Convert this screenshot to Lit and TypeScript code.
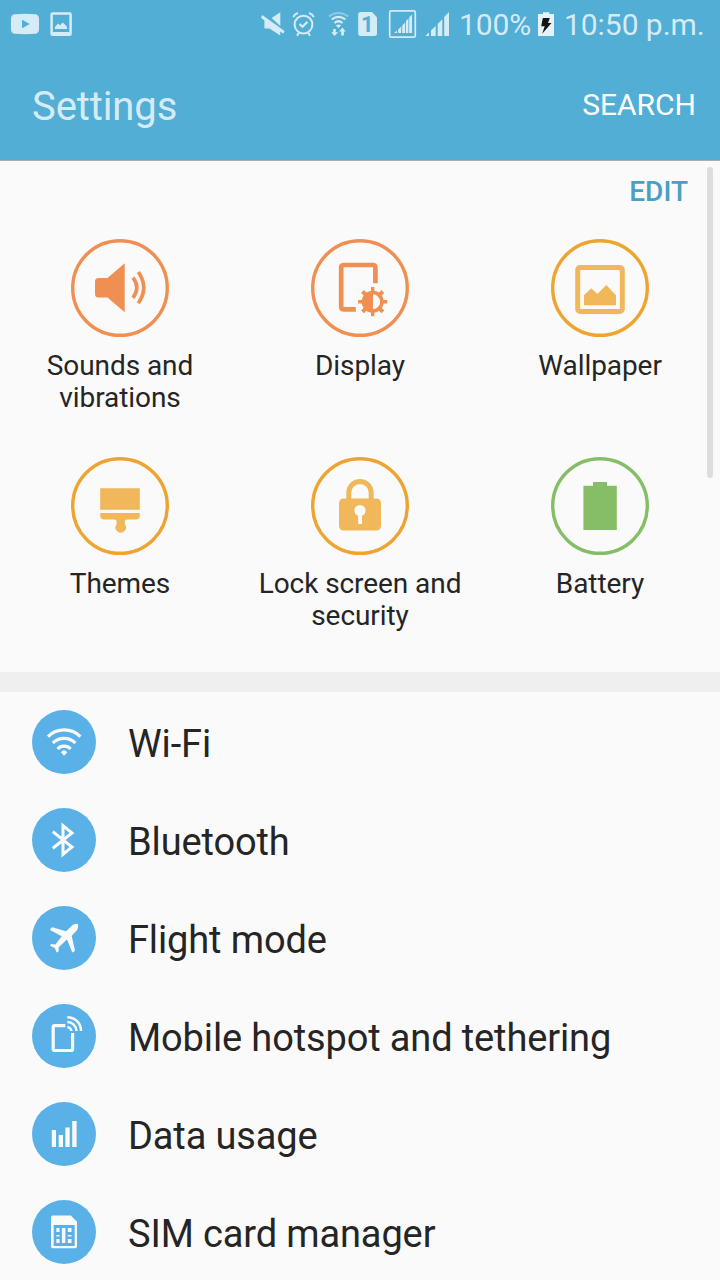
import { LitElement, html, svg, css } from "lit";
import { customElement, property } from "lit/decorators.js";

const ORANGE = "#ef9052";
const AMBER = "#eda431";
const GREEN = "#86be68";

const tiles = [
  {
    label: "Sounds and vibrations",
    ring: ORANGE,
    art: svg`<path fill="#ef9052" d="M27.5 39H36.5L53.7 24.3V73.3L36.5 58.6H27.5Q24 58.6 24 55V42.5Q24 39 27.5 39Z"/>
      <g fill="none" stroke="#ef9052" stroke-width="3.7"><path d="M62 38.6Q69.6 48.6 62 58.8"/><path d="M67.3 33Q78.2 48.6 67.3 64.2"/></g>`,
  },
  {
    label: "Display",
    ring: ORANGE,
    art: svg`<path fill="none" stroke="#ef9052" stroke-width="4.7" d="M64.4 44.3V28.6Q64.4 26 61.8 26H33Q30.2 26 30.2 28.6V67.8Q30.2 70.4 33 70.4H44.8"/>
      <circle cx="61.7" cy="62.7" r="9.2" fill="none" stroke="#ef9052" stroke-width="3.6"/>
      <path fill="#ef9052" d="M62 53.5A9.2 9.2 0 0 0 62 71.9Z"/>
      <g stroke="#ef9052" stroke-width="3.4"><path d="M61.7 48.1V53.6M61.7 71.8V77.3M47.1 62.7H52.6M70.8 62.7H76.3"/><path stroke-width="4" d="M51.5 52.5L55.2 56.2M68.2 69.2L71.9 72.9M71.9 52.5L68.2 56.2M55.2 69.2L51.5 72.9"/></g>`,
  },
  {
    label: "Wallpaper",
    ring: AMBER,
    art: svg`<rect x="26.7" y="28.5" width="44.6" height="44" rx="2.5" fill="none" stroke="#f0b75b" stroke-width="5"/>
      <path fill="#f0b75b" d="M33 66.3V56.3L40.3 49.3L46.3 55L55.3 46L65 56.3V66.3Z"/>`,
  },
  {
    label: "Themes",
    ring: AMBER,
    art: svg`<path fill="#f0b75b" d="M29.2 31.2H68.8V52.8H29.2ZM29.2 56H68.8V58.5Q68.8 62.4 65 62.4H56Q53.8 62.4 53.8 64.5V67.2A5.2 5.2 0 1 1 45.6 67.2V64.5Q45.6 62.4 43.4 62.4H33Q29.2 62.4 29.2 58.5Z"/>`,
  },
  {
    label: "Lock screen and security",
    ring: AMBER,
    art: svg`<path fill="none" stroke="#f0b75b" stroke-width="5" d="M37.8 43V35.7A11.2 11.2 0 0 1 60.2 35.7V43"/>
      <rect x="28" y="41.4" width="42" height="32.2" rx="4.5" fill="#f0b75b"/>
      <circle cx="49" cy="53.5" r="5.6" fill="#fafafa"/><path fill="#fafafa" d="M47.2 57H51V67H47.2Z"/>`,
  },
  {
    label: "Battery",
    ring: GREEN,
    art: svg`<path fill="#86be68" d="M42 25H56V28.8H65.8V73H32.4V28.8H42Z"/>`,
  },
];

const rows = [
  {
    label: "Wi-Fi",
    art: svg`<g fill="none" stroke="#fafafa" stroke-width="3.2"><path d="M16 26.6A23 23 0 0 1 48.4 26.6"/><path d="M20.8 33A16 16 0 0 1 43.4 33"/><path d="M25.6 39A9 9 0 0 1 38.6 39"/></g>
      <path fill="#fafafa" d="M28.9 42.2Q32.1 38.4 35.3 42.2L32.1 45.8Z"/>`,
  },
  {
    label: "Bluetooth",
    art: svg`<path fill="none" stroke="#fafafa" stroke-width="3" d="M20.8 23.6L40 39L31 46.4V17.6L40 25L20.8 40.2"/>`,
  },
  {
    label: "Flight mode",
    art: svg`<path fill="#fafafa" d="M46 18Q43.5 17.3 40.7 18.9L34 25.3L20.3 21.2Q18.8 22 18 24L29.7 30.3L23.4 38.4L19.3 38Q18.3 38.7 18 39.7L22.7 42L24.7 46.4Q26 46.3 26.7 45.3L26.7 41.3L35 33.4L40.3 46.4Q42.2 46.2 43 44.6L39.7 30L45.3 23.7Q46.6 21 46 18Z"/>`,
  },
  {
    label: "Mobile hotspot and tethering",
    art: svg`<g fill="none" stroke="#fafafa"><path stroke-width="3.2" d="M33.4 21.6H22.6Q21.2 21.6 21.2 23V45Q21.2 46.5 22.6 46.5H39.2Q40.6 46.5 40.6 45V29"/>
      <path stroke-width="2.4" d="M35.3 23.2A4 4 0 0 1 39.3 27M35.3 18A9.2 9.2 0 0 1 44.5 27M35.3 13.2A13.6 13.6 0 0 1 49 27"/></g>`,
  },
  {
    label: "Data usage",
    art: svg`<path fill="#fafafa" d="M19.8 28H24V45H19.8ZM26.7 33H31V45H26.7ZM33.4 25.4H37.7V45H33.4ZM40.2 19H44.6V45H40.2Z"/>`,
  },
  {
    label: "SIM card manager",
    art: svg`<path fill="#fafafa" fill-rule="evenodd" d="M20.8 15.5H38.8L45 21.8V46.6Q45 48.3 43.2 48.3H20.8Q19 48.3 19 46.6V17.2Q19 15.5 20.8 15.5ZM21.7 25V46H42.7V25Z"/>
      <path fill="#fafafa" d="M24.3 28H27.5V32H24.3ZM24.3 34.9H27.5V36.5H24.3ZM24.3 39H27.5V43H24.3ZM29.9 28H33.4V43H29.9ZM35.8 28H39.5V32H35.8ZM35.8 34.9H39.5V36.5H35.8ZM35.8 39H39.5V43H35.8Z"/>`,
  },
];

@customElement("status-bar")
class StatusBar extends LitElement {
  static styles = css`
    :host {
      display: flex;
      align-items: flex-start;
      height: 48px;
      padding-left: 8px;
      box-sizing: border-box;
      color: #d5ebf5;
      font-size: 30px;
      line-height: 50px;
      white-space: nowrap;
    }
    svg { display: block; flex: none; }
    .gap { flex: none; width: 180px; }
    .percent { width: 77px; padding-left: 1px; letter-spacing: -0.1px; }
    .clock { padding-left: 8px; letter-spacing: -0.05px; }
    .one { font: 700 22px Roboto, sans-serif; fill: #52aed5; }
  `;
  render() {
    return html`
      <svg width="72" height="48" viewBox="8 0 72 48">
        <path fill="#d5ebf5" fill-rule="evenodd" d="M15 14.3Q25 13.4 35 14.3Q38.8 14.5 39 18.5V29.5Q38.8 33.5 35 33.8Q25 34.6 15 33.8Q11.2 33.5 11 29.5V18.5Q11.2 14.5 15 14.3ZM22 19.8V28.2L29.8 24Z"/>
        <rect x="51.6" y="13.4" width="19" height="21.3" rx="1" fill="none" stroke="#d5ebf5" stroke-width="2.5"/>
        <path fill="#d5ebf5" d="M55 29V27L58 23.6L60 25.2L62.7 22.6L65 24.6L67 27V29Z"/>
        <path fill="#d5ebf5" d="M52.5 32H69.5V34H52.5Z"/>
      </svg>
      <div class="gap"></div>
      <svg width="198" height="48" viewBox="260 0 198 48">
        <g fill="#d5ebf5">
          <path d="M280.3 12.2V26L271.6 18Z"/>
          <path d="M262.2 15L284.6 31L283.2 33.7L280.2 31.6V35.5L269.5 28.6H265.6Q264.4 28.6 264.4 27.4V20.4L261 17.8Z"/>
        </g>
        <g fill="none" stroke="#d5ebf5" stroke-width="2">
          <circle cx="303.5" cy="24.6" r="8.9"/>
          <path stroke-width="2.2" d="M299.5 24L302.5 26.7L307.5 21.8"/>
          <path d="M293.2 17Q294.5 14 298 13M313.8 17Q312.5 14 309 13M299 32.5L297 35.8M308 32.5L310 35.8"/>
        </g>
        <g fill="none" stroke="#d5ebf5" stroke-width="2.2">
          <path opacity=".45" d="M328.8 16.3Q338.5 9.6 348.2 16.3"/>
          <path d="M331.7 19.4Q338.5 14.3 345.3 19.4M334.5 23Q338.5 19.5 342.5 23"/>
        </g>
        <path fill="#d5ebf5" d="M335.8 25.6Q338.5 23.4 341.2 25.6L338.5 28ZM333.2 29H335.8V32.3H338.2L334.5 36L331.2 32.3H333.2ZM341.2 35.5V31.4H339L342.5 27.6L345.8 31.4H343.9V35.5Z"/>
        <path fill="#d5ebf5" d="M361 12H372L377 17.2V33.5Q377 36 374.4 36H361Q358.2 36 358.2 33.5V14.5Q358.2 12 361 12Z"/>
        <text class="one" x="361" y="32">1</text>
        <rect x="389.7" y="10.8" width="25.6" height="26.4" rx="1.5" fill="none" stroke="#d5ebf5" stroke-width="1.7"/>
        <path fill="#d5ebf5" d="M394 33L397 30.6V33ZM398.2 29.4L401.2 26.6V33H398.2ZM402.2 25.4L405.2 22.4V33H402.2ZM406 21L408.4 18.6V33H406ZM409.2 17.4L412 14.5V33H409.2Z"/>
        <path fill="#d5ebf5" d="M425.3 36L429 32.4V36ZM431 30.6L435.7 26V36H431ZM437.7 24L442.3 19.2V36H437.7ZM444.2 17L449 12V36H444.2Z"/>
      </svg>
      <div class="percent">100%</div>
      <svg width="20" height="48" viewBox="536 0 20 48">
        <path fill="#e4f3f9" d="M543 12.2H549.3V14H554V36H538V14H543Z"/>
        <path fill="#151515" d="M542.8 18H549.8L548 23H551.5L542.2 33.8L544.7 26.2H541.2Z"/>
      </svg>
      <div class="clock">10:50 p.m.</div>
    `;
  }
}

@customElement("quick-tile")
class QuickTile extends LitElement {
  static styles = css`
    :host { display: flex; flex-direction: column; align-items: center; height: 218px; }
    svg { display: block; }
    .label {
      width: 216px;
      padding-top: 13px;
      font-size: 28px;
      line-height: 32px;
      letter-spacing: -0.07px;
      text-align: center;
    }
  `;
  @property({ attribute: false }) tile: any;
  render() {
    return html`<svg width="98" height="98" viewBox="0 0 98 98">
        <circle cx="49" cy="49" r="47.3" fill="none" stroke=${this.tile.ring} stroke-width="3.4" />
        ${this.tile.art}
      </svg>
      <div class="label">${this.tile.label}</div>`;
  }
}

@customElement("setting-row")
class SettingRow extends LitElement {
  static styles = css`
    :host { display: flex; align-items: center; gap: 32px; height: 98px; padding-left: 32px; }
    svg { display: block; flex: none; }
    .label { padding-top: 4px; font-size: 38px; line-height: 48px; letter-spacing: -0.13px; white-space: nowrap; }
  `;
  @property({ attribute: false }) row: any;
  render() {
    return html`<svg width="64" height="64" viewBox="0 0 64 64">
        <circle cx="32" cy="32" r="32" fill="#5ab1e8" />
        ${this.row.art}
      </svg>
      <div class="label">${this.row.label}</div>`;
  }
}

@customElement("app-root")
class AppRoot extends LitElement {
  static styles = css`
    :host {
      display: block;
      position: relative;
      width: 720px;
      height: 1280px;
      overflow: hidden;
      background: #fafafa;
      color: #252525;
      font-family: Roboto, sans-serif;
    }
    .header { height: 160px; background: #52aed5; border-bottom: 1px solid #abaeb0; }
    .title-bar {
      display: flex;
      justify-content: space-between;
      align-items: center;
      height: 112px;
      padding: 0 24px 0 32px;
    }
    .title { padding-top: 5px; font-size: 40px; line-height: 48px; letter-spacing: -0.1px; color: #d5ebf5; }
    .search { padding-top: 2px; font-size: 30px; line-height: 40px; color: #fff; }
    .edit {
      height: 78px;
      padding: 15px 32px 0 0;
      box-sizing: border-box;
      font-size: 28px;
      font-weight: 500;
      line-height: 32px;
      text-align: right;
      color: #4a9fc3;
    }
    .grid { display: grid; grid-template-columns: repeat(3, 240px); height: 433px; }
    .divider { height: 20px; margin-bottom: 1px; background: #efefef; }
    .scrollbar {
      position: absolute;
      right: 7px;
      top: 167px;
      width: 6px;
      height: 311px;
      border-radius: 3px;
      background: #dcdedd;
    }
  `;
  render() {
    return html`
      <div class="header">
        <status-bar></status-bar>
        <div class="title-bar">
          <div class="title">Settings</div>
          <div class="search">SEARCH</div>
        </div>
      </div>
      <div class="edit">EDIT</div>
      <div class="grid">${tiles.map((t) => html`<quick-tile .tile=${t}></quick-tile>`)}</div>
      <div class="divider"></div>
      ${rows.map((r) => html`<setting-row .row=${r}></setting-row>`)}
      <div class="scrollbar"></div>
    `;
  }
}
